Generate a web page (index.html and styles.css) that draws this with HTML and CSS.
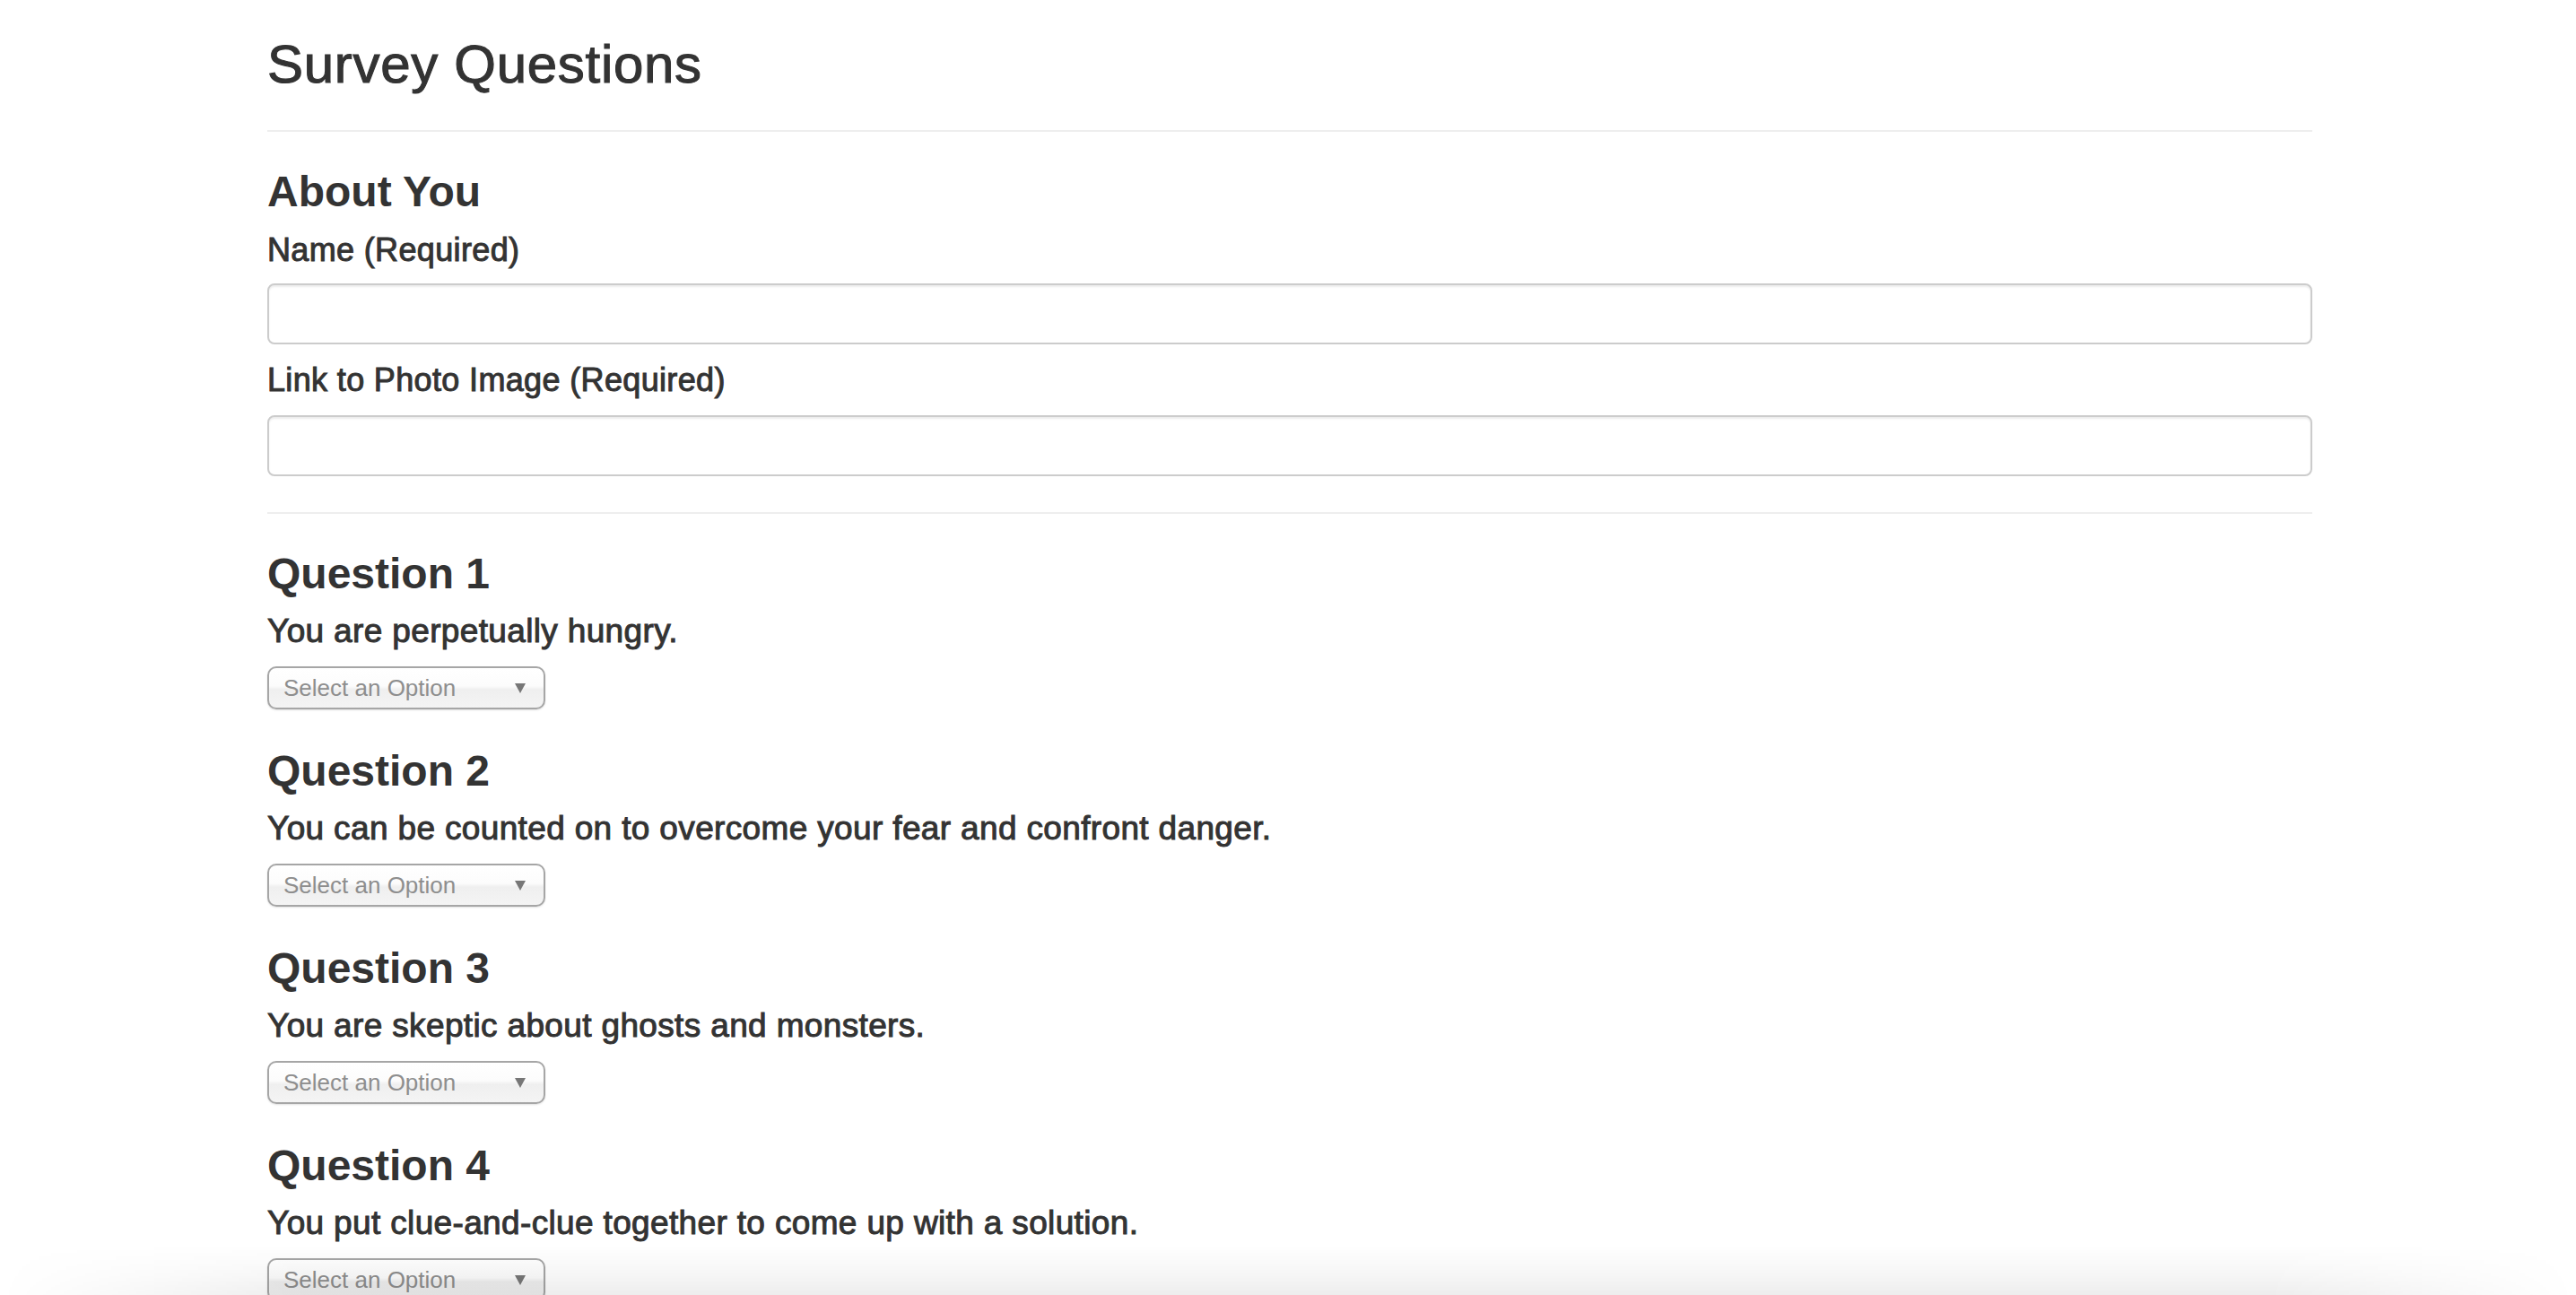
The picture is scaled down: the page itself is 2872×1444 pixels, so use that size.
FILE: index.html
```html
<!DOCTYPE html>
<html lang="en">
<head>
<meta charset="utf-8">
<title>Survey Questions</title>
<link rel="stylesheet" href="styles.css">
</head>
<body>
<div class="container">
  <h1 class="page-title">Survey Questions</h1>
  <hr class="rule">

  <section class="about">
    <h3 class="section-title">About You</h3>
    <label class="field-label label-name" for="name">Name (Required)</label>
    <input class="text-input input-name" id="name" type="text">
    <label class="field-label label-photo" for="photo">Link to Photo Image (Required)</label>
    <input class="text-input input-photo" id="photo" type="text">
  </section>

  <hr class="rule rule-section">

  <section class="question question-first">
    <h3 class="section-title">Question 1</h3>
    <p class="question-text">You are perpetually hungry.</p>
    <div class="select-wrap">
      <select class="option-select"><option>Select an Option</option><option>1 (Strongly Disagree)</option><option>2</option><option>3</option><option>4</option><option>5 (Strongly Agree)</option></select>
      <span class="select-arrow"></span>
    </div>
  </section>

  <section class="question">
    <h3 class="section-title">Question 2</h3>
    <p class="question-text">You can be counted on to overcome your fear and confront danger.</p>
    <div class="select-wrap">
      <select class="option-select"><option>Select an Option</option><option>1 (Strongly Disagree)</option><option>2</option><option>3</option><option>4</option><option>5 (Strongly Agree)</option></select>
      <span class="select-arrow"></span>
    </div>
  </section>

  <section class="question">
    <h3 class="section-title">Question 3</h3>
    <p class="question-text">You are skeptic about ghosts and monsters.</p>
    <div class="select-wrap">
      <select class="option-select"><option>Select an Option</option><option>1 (Strongly Disagree)</option><option>2</option><option>3</option><option>4</option><option>5 (Strongly Agree)</option></select>
      <span class="select-arrow"></span>
    </div>
  </section>

  <section class="question">
    <h3 class="section-title">Question 4</h3>
    <p class="question-text">You put clue-and-clue together to come up with a solution.</p>
    <div class="select-wrap">
      <select class="option-select"><option>Select an Option</option><option>1 (Strongly Disagree)</option><option>2</option><option>3</option><option>4</option><option>5 (Strongly Agree)</option></select>
      <span class="select-arrow"></span>
    </div>
  </section>
</div>
<div class="bottom-shade"></div>
</body>
</html>
```

FILE: styles.css
```css
html {
  overflow: hidden;
  background: #ffffff;
}

body {
  margin: 0;
  padding: 0 0 0 4px;
  font-family: "Liberation Sans", Arial, Helvetica, sans-serif;
  color: #333333;
  background: #ffffff;
}

.container {
  width: 2280px;
  margin: 0 auto;
  display: flex;
  flex-direction: column;
}

.page-title {
  margin: 39px 0 0;
  font-size: 60px;
  line-height: 66px;
  font-weight: 400;
  letter-spacing: 0.7px;
  -webkit-text-stroke: 1.1px #333333;
}

.rule {
  border: 0;
  height: 2px;
  background: #eeeeee;
  margin: 40px 0 0;
  width: 100%;
}

.about {
  display: flex;
  flex-direction: column;
  margin-top: 40px;
}

.section-title {
  margin: 0;
  font-size: 48px;
  line-height: 53px;
  font-weight: 700;
}

.field-label {
  display: block;
  font-size: 36px;
  line-height: 40px;
  font-weight: 400;
  letter-spacing: 0.35px;
  -webkit-text-stroke: 1px #333333;
}

.label-name {
  margin-top: 19px;
}

.label-photo {
  margin-top: 20px;
}

.text-input {
  box-sizing: border-box;
  width: 100%;
  height: 68px;
  margin: 17px 0 0;
  padding: 12px 24px;
  border: 2px solid #cccccc;
  border-radius: 8px;
  background: #ffffff;
  box-shadow: inset 0 2px 2px rgba(0, 0, 0, 0.075);
  font-family: inherit;
  font-size: 28px;
  color: #555555;
  outline: none;
}

.input-photo {
  margin-top: 19px;
}

.rule-section {
  margin-top: 40px;
}

.question {
  display: flex;
  flex-direction: column;
  margin-top: 42px;
}

.question-first {
  margin-top: 40px;
}

.question-text {
  margin: 18px 0 0;
  font-size: 37px;
  line-height: 40px;
  font-weight: 400;
  letter-spacing: 0.35px;
  -webkit-text-stroke: 1px #333333;
}

.select-wrap {
  position: relative;
  align-self: flex-start;
  margin-top: 19px;
  width: 310px;
  height: 48px;
}

.option-select {
  -webkit-appearance: none;
  appearance: none;
  box-sizing: border-box;
  width: 310px;
  height: 48px;
  margin: 0;
  padding: 0 40px 0 16px;
  border: 2px solid #a6a6a6;
  border-radius: 10px;
  background: linear-gradient(to bottom, #ffffff 0%, #fcfcfc 45%, #efefef 55%, #f4f4f4 100%);
  box-shadow: 0 1px 2px rgba(0, 0, 0, 0.12);
  font-family: "Liberation Sans", Arial, Helvetica, sans-serif;
  font-size: 26px;
  line-height: 44px;
  color: #8e8e8e;
  outline: none;
}

.select-arrow {
  position: absolute;
  top: 19px;
  right: 22px;
  width: 0;
  height: 0;
  border-left: 6px solid transparent;
  border-right: 6px solid transparent;
  border-top: 11px solid #777777;
  pointer-events: none;
}

.bottom-shade {
  position: fixed;
  left: 0;
  right: 0;
  bottom: 0;
  height: 56px;
  background: linear-gradient(to bottom, rgba(0, 0, 0, 0) 0%, rgba(0, 0, 0, 0.035) 60%, rgba(0, 0, 0, 0.07) 100%);
  -webkit-mask-image: linear-gradient(to right, transparent 0%, #000 12%, #000 88%, transparent 100%);
  mask-image: linear-gradient(to right, transparent 0%, #000 12%, #000 88%, transparent 100%);
  pointer-events: none;
}
```
